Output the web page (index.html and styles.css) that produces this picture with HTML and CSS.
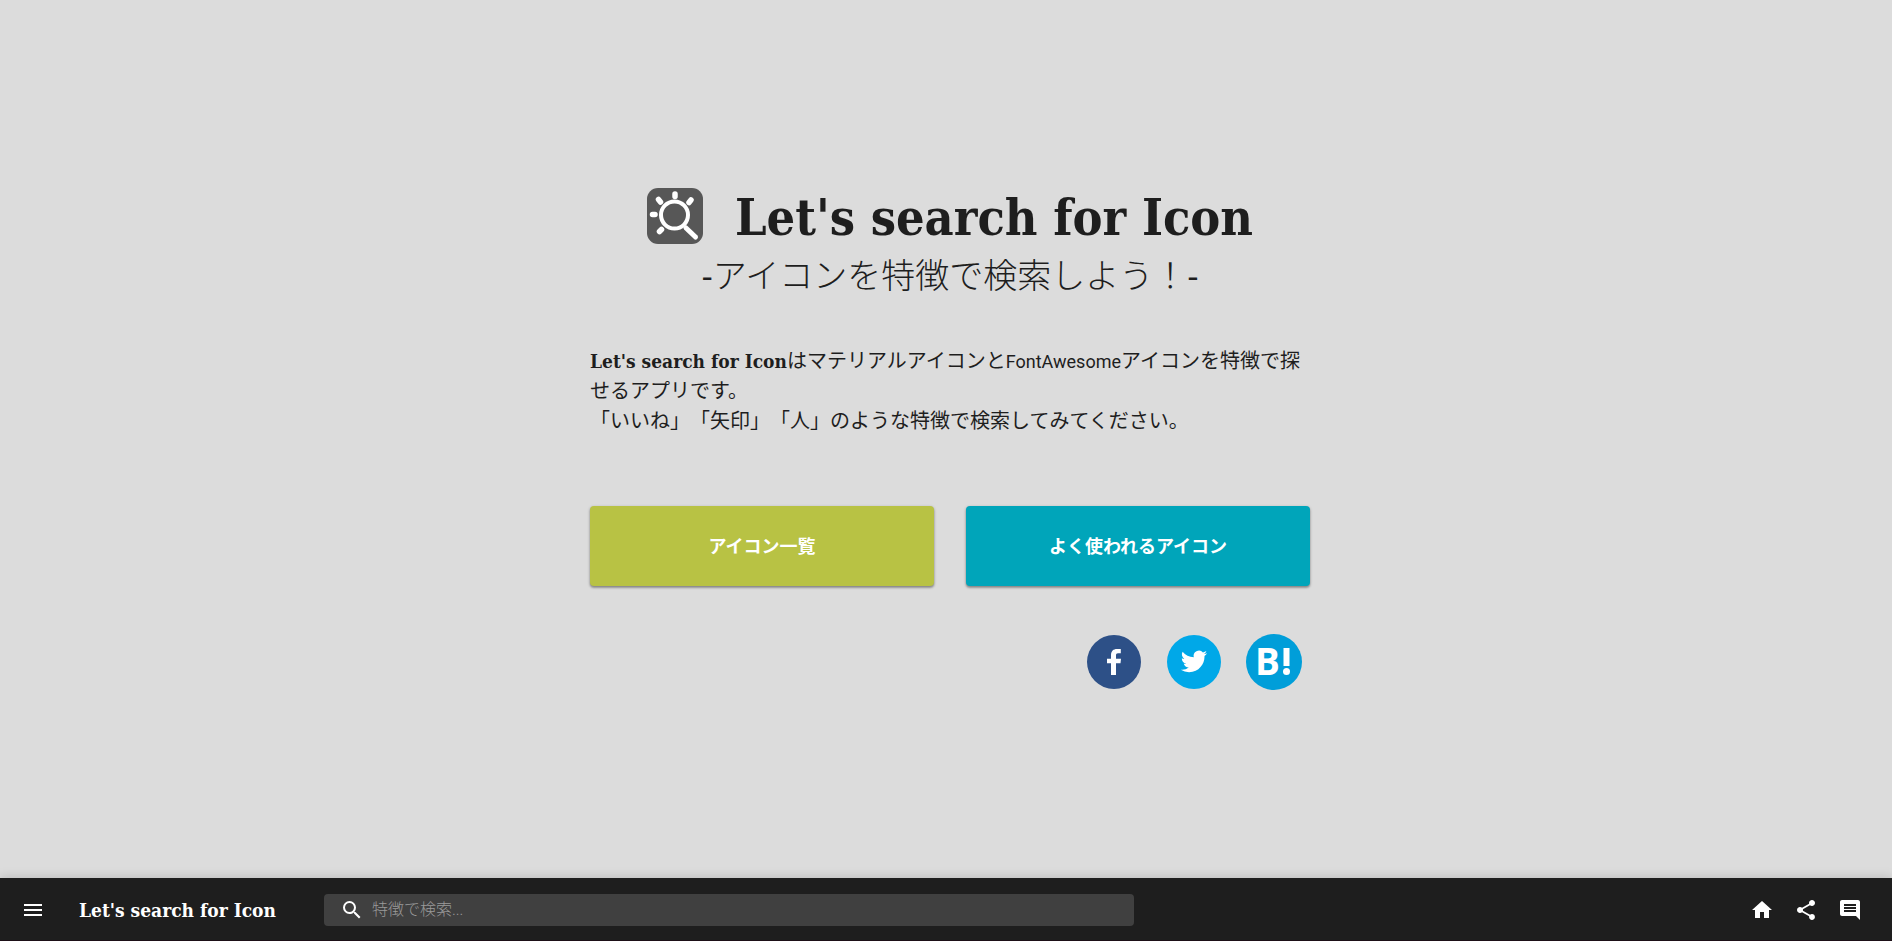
FILE: index.html
```
<!DOCTYPE html>
<html lang="ja">
<head>
<meta charset="UTF-8">
<meta name="viewport" content="width=device-width, initial-scale=1.0">
<title>Let's search for Icon</title>
<link rel="stylesheet" href="styles.css">
</head>
<body>
<main class="main">
  <div class="container">
    <div class="title">
      <svg class="logo" viewBox="0 0 56 56" fill="none" stroke="#fff" stroke-linecap="round">
        <rect width="56" height="56" rx="11" fill="#575757" stroke="none"/>
        <circle cx="27.5" cy="27" r="13.500" stroke-width="4"/>
        <path stroke-width="5" d="M39 40l9.500 9"/>
        <path stroke-width="5.500" d="M28 6v2.500M11.500 11.500l2 2.500M44 12l-2 2.500M5.500 26.500h2.500M12.500 43.500l2-2"/>
      </svg>
      <h1>Let's search for Icon</h1>
    </div>
    <p class="subtitle">-アイコンを特徴で検索しよう！-</p>
    <p class="description"><strong class="brand">Let's search for Icon</strong>はマテリアルアイコンと<span class="latin">FontAwesome</span>アイコンを特徴で探せるアプリです。<br>「いいね」「矢印」「人」のような特徴で検索してみてください。</p>
    <div class="buttons">
      <button type="button" class="button lime">アイコン一覧</button>
      <button type="button" class="button cyan">よく使われるアイコン</button>
    </div>
    <div class="social">
      <a href="#" aria-label="Facebook">
        <svg viewBox="0 0 56 56">
          <circle cx="28" cy="28" r="27" fill="#2d5087"/>
          <path fill="#fff" d="M25 41V29.200h-4v-4.400h4v-3.500c0-4.300 2.400-6.300 6-6.300h3.800v4.200h-2.800c-1.500 0-2 .7-2 2.100v3.500h5l-.5 4.400h-4.500V41z"/>
        </svg>
      </a>
      <a href="#" aria-label="Twitter">
        <svg viewBox="0 0 56 56">
          <circle cx="28" cy="28" r="27" fill="#00a8e8"/>
          <path fill="#fff" transform="translate(14.800 14.200) scale(1.100)" d="M23.950 4.570a10 10 0 0 1-2.820.77 4.960 4.960 0 0 0 2.160-2.720c-.95.550-2 .950-3.130 1.180a4.920 4.920 0 0 0-8.380 4.480C7.690 8.090 4.070 6.130 1.640 3.160a4.920 4.920 0 0 0 1.520 6.570 4.900 4.900 0 0 1-2.230-.61v.06a4.920 4.920 0 0 0 3.950 4.830 5 5 0 0 1-2.210.08 4.940 4.940 0 0 0 4.600 3.420A9.870 9.870 0 0 1 0 19.540a13.990 13.990 0 0 0 7.550 2.210c9.050 0 14-7.500 14-13.980 0-.21 0-.42-.02-.63a9.940 9.940 0 0 0 2.420-2.570z"/>
        </svg>
      </a>
      <a href="#" aria-label="はてなブックマーク">
        <svg viewBox="0 0 56 56">
          <circle cx="28" cy="28" r="28" fill="#009ed9"/>
          <text class="hatena" x="9" y="41">B</text>
          <rect x="37.500" y="14" width="6" height="18" fill="#fff"/>
          <circle cx="40.500" cy="37.500" r="3.500" fill="#fff"/>
        </svg>
      </a>
    </div>
  </div>
</main>

<footer class="appbar">
  <button type="button" class="icon-button" aria-label="メニュー">
    <svg viewBox="0 0 24 24"><path d="M3 18h18v-2H3v2zm0-5h18v-2H3v2zm0-7v2h18V6H3z"/></svg>
  </button>
  <a href="#" class="brand appbar-title">Let's search for Icon</a>
  <label class="search">
    <svg viewBox="0 0 24 24"><path d="M15.500 14h-.79l-.28-.27A6.471 6.471 0 0 0 16 9.500 6.500 6.500 0 1 0 9.500 16c1.610 0 3.090-.59 4.230-1.570l.27.28v.79l5 4.990L20.490 19l-4.990-5zm-6 0C7.010 14 5 11.990 5 9.500S7.010 5 9.500 5 14 7.010 14 9.500 11.990 14 9.500 14z"/></svg>
    <input type="text" placeholder="特徴で検索..." aria-label="特徴で検索">
  </label>
  <div class="actions">
    <button type="button" class="icon-button" aria-label="ホーム">
      <svg viewBox="0 0 24 24"><path d="M10 20v-6h4v6h5v-8h3L12 3 2 12h3v8z"/></svg>
    </button>
    <button type="button" class="icon-button" aria-label="共有">
      <svg viewBox="0 0 24 24"><path d="M18 16.080c-.76 0-1.440.3-1.960.77L8.910 12.700c.05-.23.09-.46.09-.7s-.04-.47-.09-.7l7.050-4.110c.54.5 1.250.81 2.040.81 1.660 0 3-1.340 3-3s-1.340-3-3-3-3 1.340-3 3c0 .24.040.47.090.7L8.040 9.810C7.500 9.310 6.790 9 6 9c-1.660 0-3 1.340-3 3s1.340 3 3 3c.79 0 1.500-.31 2.040-.81l7.120 4.160c-.05.210-.08.430-.08.650 0 1.610 1.310 2.920 2.920 2.920s2.920-1.310 2.920-2.920-1.310-2.920-2.920-2.920z"/></svg>
    </button>
    <button type="button" class="icon-button" aria-label="コメント">
      <svg viewBox="0 0 24 24"><path d="M21.990 4c0-1.100-.89-2-1.990-2H4c-1.100 0-2 .9-2 2v12c0 1.100.9 2 2 2h14l4 4-.01-18zM18 14H6v-2h12v2zm0-3H6V9h12v2zm0-3H6V6h12v2z"/></svg>
    </button>
  </div>
</footer>
</body>
</html>
```
FILE: styles.css
```
* {
  box-sizing: border-box;
}

body {
  margin: 0;
  background-color: #dcdcdc;
  color: #1e1e1e;
  font-family: Roboto, "Noto Sans CJK JP", sans-serif;
}

h1, p {
  margin: 0;
}

h1, .brand {
  font-family: "Roboto Slab", "DejaVu Serif Condensed", "DejaVu Serif", serif;
  font-weight: 700;
}

.main {
  min-height: calc(100vh - 63px);
  padding-left: 8px;
  display: flex;
  align-items: center;
  justify-content: center;
}

.container {
  width: 100%;
  max-width: 720px;
}

.title {
  display: flex;
  justify-content: center;
  gap: 32px;
}

.logo {
  width: 56px;
  height: 56px;
  flex: none;
}

h1 {
  font-size: 50px;
  line-height: 60px;
  white-space: nowrap;
}

.subtitle {
  margin-top: 3px;
  font-family: "Liberation Sans", "Noto Sans CJK JP", sans-serif;
  font-size: 34px;
  line-height: 50px;
  font-weight: 300;
  text-align: center;
}

.description {
  margin-top: 44px;
  font-family: "Noto Sans CJK JP", sans-serif;
  font-size: 20px;
  line-height: 30px;
  text-spacing-trim: space-all;
}

.brand {
  font-size: 19px;
  line-height: 24px;
}

.latin {
  font-family: Roboto, sans-serif;
  font-size: 18px;
  line-height: 24px;
}

.buttons {
  display: flex;
  gap: 32px;
  margin-top: 71px;
}

.button {
  flex: 1;
  height: 80px;
  padding: 0 16px 2px;
  border: 0;
  border-radius: 4px;
  box-shadow: 0 1px 3px rgba(0, 0, 0, 0.3), 0 2px 2px rgba(0, 0, 0, 0.2);
  color: #fff;
  font-family: inherit;
  font-size: 18px;
  font-weight: 700;
  cursor: pointer;
}

.lime {
  background-color: #b8c244;
}

.cyan {
  background-color: #00a5ba;
}

.social {
  display: flex;
  justify-content: flex-end;
  gap: 24px;
  margin-top: 48px;
  padding-right: 8px;
}

.social svg {
  display: block;
  width: 56px;
  height: 56px;
}

.hatena {
  fill: #fff;
  font-family: "Open Sans", sans-serif;
  font-size: 37px;
  font-weight: 700;
}

.appbar {
  position: sticky;
  bottom: 0;
  display: flex;
  align-items: center;
  height: 63px;
  padding: 2px 20px 0 11px;
  background-color: #1e1e1e;
  border-bottom: 1px solid #1d0f17;
  box-shadow: 0 -1px 10px rgba(0, 0, 0, 0.15);
}

.icon-button {
  padding: 10px;
  border: 0;
  background: none;
  cursor: pointer;
}

.appbar svg {
  display: block;
  width: 24px;
  height: 24px;
  fill: #fff;
}

.appbar-title {
  margin: 0 48px 0 24px;
  color: #fff;
  text-decoration: none;
  white-space: nowrap;
}

.search {
  display: flex;
  align-items: center;
  gap: 8px;
  width: 810px;
  height: 32px;
  padding: 0 16px;
  border-radius: 4px;
  background-color: #404040;
}

.search input {
  flex: 1;
  min-width: 0;
  padding: 0 0 2px;
  border: 0;
  outline: 0;
  background: none;
  color: #fff;
  font-family: inherit;
  font-size: 16px;
}

.search input::placeholder {
  color: #9a9a9a;
  font-weight: 300;
}

.actions {
  display: flex;
  margin-left: auto;
}
```
